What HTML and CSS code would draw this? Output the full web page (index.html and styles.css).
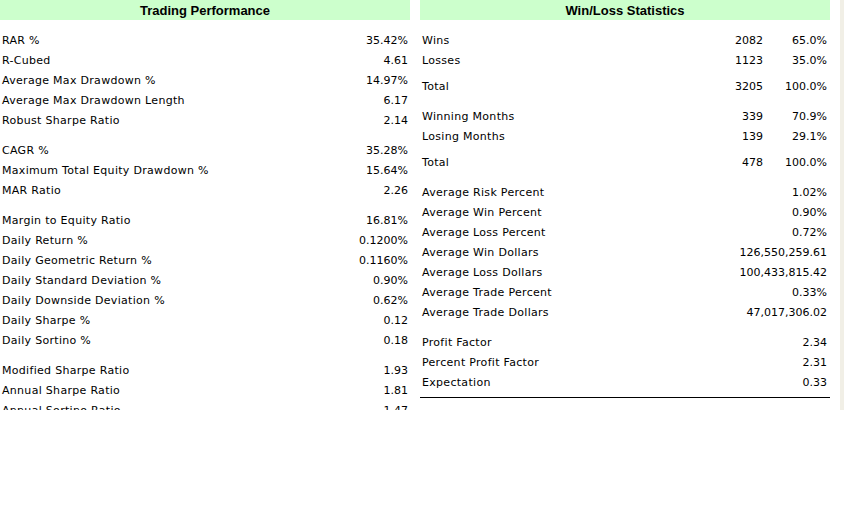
FILE: index.html
```html
<!DOCTYPE html>
<html>
<head>
<meta charset="utf-8">
<link rel="stylesheet" href="styles.css">
</head>
<body>
<div class="frame">
  <section class="panel">
    <h2 class="hdr">Trading Performance</h2>
    <div class="group">
      <div class="row"><span class="lbl">RAR %</span><span>35.42%</span></div>
      <div class="row"><span class="lbl">R-Cubed</span><span>4.61</span></div>
      <div class="row"><span class="lbl">Average Max Drawdown %</span><span>14.97%</span></div>
      <div class="row"><span class="lbl">Average Max Drawdown Length</span><span>6.17</span></div>
      <div class="row"><span class="lbl">Robust Sharpe Ratio</span><span>2.14</span></div>
    </div>
    <div class="group">
      <div class="row"><span class="lbl">CAGR %</span><span>35.28%</span></div>
      <div class="row"><span class="lbl">Maximum Total Equity Drawdown %</span><span>15.64%</span></div>
      <div class="row"><span class="lbl">MAR Ratio</span><span>2.26</span></div>
    </div>
    <div class="group">
      <div class="row"><span class="lbl">Margin to Equity Ratio</span><span>16.81%</span></div>
      <div class="row"><span class="lbl">Daily Return %</span><span>0.1200%</span></div>
      <div class="row"><span class="lbl">Daily Geometric Return %</span><span>0.1160%</span></div>
      <div class="row"><span class="lbl">Daily Standard Deviation %</span><span>0.90%</span></div>
      <div class="row"><span class="lbl">Daily Downside Deviation %</span><span>0.62%</span></div>
      <div class="row"><span class="lbl">Daily Sharpe %</span><span>0.12</span></div>
      <div class="row"><span class="lbl">Daily Sortino %</span><span>0.18</span></div>
    </div>
    <div class="group">
      <div class="row"><span class="lbl">Modified Sharpe Ratio</span><span>1.93</span></div>
      <div class="row"><span class="lbl">Annual Sharpe Ratio</span><span>1.81</span></div>
      <div class="row"><span class="lbl">Annual Sortino Ratio</span><span>1.47</span></div>
    </div>
  </section>
  <section class="panel right">
    <h2 class="hdr">Win/Loss Statistics</h2>
    <div class="group">
      <div class="row3"><span class="lbl">Wins</span><span>2082</span><span>65.0%</span></div>
      <div class="row3"><span class="lbl">Losses</span><span>1123</span><span>35.0%</span></div>
      <div class="row3 total"><span class="lbl">Total</span><span>3205</span><span>100.0%</span></div>
    </div>
    <div class="group">
      <div class="row3"><span class="lbl">Winning Months</span><span>339</span><span>70.9%</span></div>
      <div class="row3"><span class="lbl">Losing Months</span><span>139</span><span>29.1%</span></div>
      <div class="row3 total"><span class="lbl">Total</span><span>478</span><span>100.0%</span></div>
    </div>
    <div class="group">
      <div class="row"><span class="lbl">Average Risk Percent</span><span>1.02%</span></div>
      <div class="row"><span class="lbl">Average Win Percent</span><span>0.90%</span></div>
      <div class="row"><span class="lbl">Average Loss Percent</span><span>0.72%</span></div>
      <div class="row"><span class="lbl">Average Win Dollars</span><span>126,550,259.61</span></div>
      <div class="row"><span class="lbl">Average Loss Dollars</span><span>100,433,815.42</span></div>
      <div class="row"><span class="lbl">Average Trade Percent</span><span>0.33%</span></div>
      <div class="row"><span class="lbl">Average Trade Dollars</span><span>47,017,306.02</span></div>
    </div>
    <div class="group last">
      <div class="row"><span class="lbl">Profit Factor</span><span>2.34</span></div>
      <div class="row"><span class="lbl">Percent Profit Factor</span><span>2.31</span></div>
      <div class="row"><span class="lbl">Expectation</span><span>0.33</span></div>
    </div>
  </section>
  <div class="scroll"></div>
</div>
</body>
</html>
```

FILE: styles.css
```css
html, body {
  margin: 0;
  padding: 0;
  background: #ffffff;
}
body {
  font-family: "DejaVu Sans", sans-serif;
  font-size: 11px;
  color: #000000;
}
.frame {
  display: flex;
  gap: 10px;
  width: 844px;
  height: 410px;
  overflow: hidden;
}
.panel {
  width: 410px;
  flex: none;
}
.hdr {
  margin: 0 0 10px 0;
  height: 20px;
  line-height: 21px;
  background: #ccffcc;
  text-align: center;
  font-family: "Liberation Sans", Arial, sans-serif;
  font-size: 13px;
  font-weight: bold;
}
.group + .group {
  margin-top: 10px;
}
.lbl {
  letter-spacing: 0.3px;
}
.row {
  display: flex;
  justify-content: space-between;
  height: 20px;
  line-height: 21px;
  padding: 0 2px;
}
.right .row {
  padding: 0 3px 0 2px;
}
.row3 {
  display: grid;
  grid-template-columns: 1fr 60px 64px;
  height: 20px;
  line-height: 21px;
  padding: 0 3px 0 2px;
}
.row3 span + span {
  text-align: right;
}
.row3.total {
  margin-top: 6px;
}
.last {
  border-bottom: 1px solid #000000;
  padding-bottom: 5px;
}
.scroll {
  margin-left: auto;
  width: 4px;
  height: 410px;
  flex: none;
  background: #f1efe6;
}
```
